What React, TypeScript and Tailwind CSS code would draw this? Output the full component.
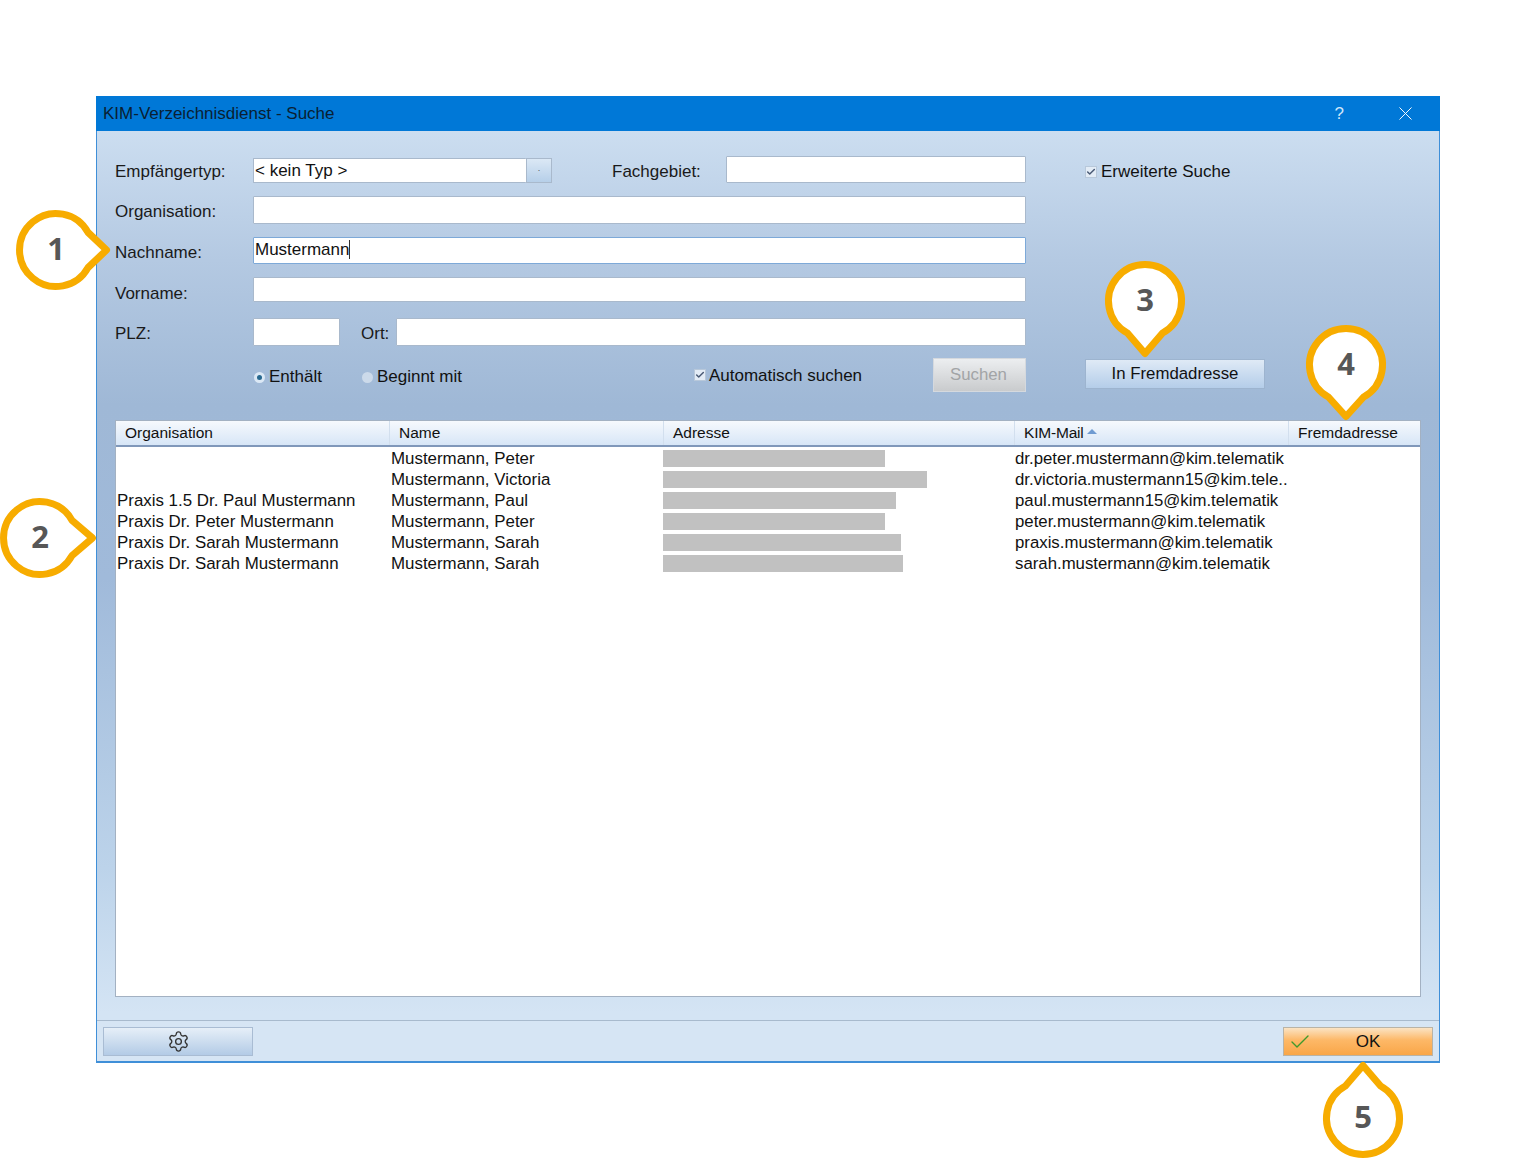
import { Check, Settings, X } from 'lucide-react'

const rows = [
  { org: '', name: 'Mustermann, Peter', bar: 'w-[222px]', mail: 'dr.peter.mustermann@kim.telematik' },
  { org: '', name: 'Mustermann, Victoria', bar: 'w-[264px]', mail: 'dr.victoria.mustermann15@kim.tele..' },
  { org: 'Praxis 1.5 Dr. Paul Mustermann', name: 'Mustermann, Paul', bar: 'w-[233px]', mail: 'paul.mustermann15@kim.telematik' },
  { org: 'Praxis Dr. Peter Mustermann', name: 'Mustermann, Peter', bar: 'w-[222px]', mail: 'peter.mustermann@kim.telematik' },
  { org: 'Praxis Dr. Sarah Mustermann', name: 'Mustermann, Sarah', bar: 'w-[238px]', mail: 'praxis.mustermann@kim.telematik' },
  { org: 'Praxis Dr. Sarah Mustermann', name: 'Mustermann, Sarah', bar: 'w-[240px]', mail: 'sarah.mustermann@kim.telematik' },
]

function Field({ className = 'border-[#a9b9cc]', children }: { className?: string; children?: React.ReactNode }) {
  return (
    <div className={`h-full bg-white border rounded-[1px] flex items-center pl-[1px] text-[17px] text-[#111] ${className}`}>
      {children}
    </div>
  )
}

function FormRow({ label, className = '', labelClass = 'pt-[3px]', children }: { label: string; className?: string; labelClass?: string; children: React.ReactNode }) {
  return (
    <div className={`flex items-center ${className}`}>
      <span className={`w-[138px] shrink-0 text-[#1a1a1a] ${labelClass}`}>{label}</span>
      {children}
    </div>
  )
}

function Tick() {
  return (
    <span className="w-[12px] h-[12px] shrink-0 bg-[#e3ecf6] border border-[#b8c8da] flex items-center justify-center">
      <Check size={10} strokeWidth={3.5} className="text-[#4a5a75]" />
    </span>
  )
}

// speech bubble: the tip points to the right, rotation turns it
function Callout({ n, className, turn = '', tip = 54 }: { n: number; className: string; turn?: string; tip?: number }) {
  return (
    <div className={`absolute w-[80px] h-[80px] flex items-center justify-center ${className}`}>
      <svg viewBox="-40 -40 80 80" className={`absolute inset-0 w-[80px] h-[80px] overflow-visible ${turn}`}>
        <path
          d={`M32 -17.6 A36.5 36.5 0 1 0 32 17.6 L${tip - 3.5} 0 Z`}
          fill="#fff"
          stroke="#f7ac00"
          strokeWidth="7"
          strokeLinejoin="round"
        />
      </svg>
      <span className="relative mb-[4px] font-['Open_Sans',sans-serif] font-bold text-[31px] leading-none text-[#575757]">{n}</span>
    </div>
  )
}

export default function App() {
  return (
    <div className="relative w-[1536px] h-[1159px] bg-white pt-[96px] pl-[96px] overflow-hidden font-['Liberation_Sans',Arial,sans-serif] text-[17px]">
      <div className="w-[1344px] h-[967px] flex flex-col border-x border-b-2 border-[#3f8fd8] bg-[linear-gradient(180deg,#d2e3f4_0%,#b4c9e2_17%,#9fb8d6_32%,#a0bada_50%,#bcd3ea_80%,#d4e4f4_95%)]">
        {/* title bar */}
        <div className="h-[35px] -mx-px shrink-0 bg-[#0078d7] flex items-center pl-[7px] text-[17px] text-[#0a1f33]">
          <span>KIM-Verzeichnisdienst - Suche</span>
          <span className="ml-auto text-[17px] text-[#cfe6fa]">?</span>
          <X size={23} strokeWidth={1} className="ml-[50px] mr-[23px] text-white" />
        </div>

        {/* search form */}
        <div className="h-[289px] shrink-0 flex pl-[18px] pt-[25px]">
          <div className="w-[911px] shrink-0 flex flex-col">
            <FormRow label="Empfängertyp:" className="h-[27px]" labelClass="pt-[5px]">
              <div className="w-[299px] h-[25px] mt-[2px] flex">
                <Field className="flex-1 border-[#a9b9cc] border-r-0">&lt; kein Typ &gt;</Field>
                <div className="w-[26px] bg-[linear-gradient(180deg,#dbe8f5,#b6cfe9)] border border-[#a9b9cc] flex items-center justify-center text-[9px] text-[#556]">·</div>
              </div>
              <span className="ml-[60px] w-[114px] pt-[5px] text-[#1a1a1a]">Fachgebiet:</span>
              <Field className="flex-1 border-[#a9b9cc]" />
            </FormRow>
            <FormRow label="Organisation:" className="h-[28px] mt-[13px]">
              <Field className="flex-1 border-[#a9b9cc]" />
            </FormRow>
            <FormRow label="Nachname:" className="h-[27px] mt-[13px]" labelClass="pt-[4px]">
              <Field className="flex-1 border-[#7da9d8] pb-[2px]">
                Mustermann<span className="w-px h-[19px] bg-[#333]" />
              </Field>
            </FormRow>
            <FormRow label="Vorname:" className="h-[25px] mt-[13px]" labelClass="pt-[8px]">
              <Field className="flex-1 border-[#a9b9cc]" />
            </FormRow>
            <FormRow label="PLZ:" className="h-[28px] mt-[16px]" labelClass="pt-[3px]">
              <Field className="w-[87px] border-[#a9b9cc]" />
              <span className="ml-[21px] w-[35px] pt-[3px] text-[#1a1a1a]">Ort:</span>
              <Field className="flex-1 border-[#a9b9cc]" />
            </FormRow>
            <div className="h-[34px] mt-[12px] flex items-center pl-[139px]">
              <span className="w-[11px] h-[11px] rounded-full bg-[#dbe8f5] flex items-center justify-center mt-[5px]">
                <span className="w-[5px] h-[5px] rounded-full bg-[#27688f]" />
              </span>
              <span className="ml-[4px] mt-[3px] text-[#111]">Enthält</span>
              <span className="ml-[40px] w-[11px] h-[11px] rounded-full bg-[#ccdaea] mt-[5px]" />
              <span className="ml-[4px] mt-[3px] text-[#111]">Beginnt mit</span>
              <div className="ml-[232px] mr-[3px] mt-[-1px]"><Tick /></div>
              <span className="mt-[1px] text-[#111]">Automatisch suchen</span>
              <div className="ml-auto w-[93px] h-[34px] bg-[linear-gradient(180deg,#eceef0,#c9cbcd)] border border-[#d5d9de] flex items-center justify-center pr-[2px] text-[16.8px] text-[#a2a4a6]">
                Suchen
              </div>
            </div>
          </div>
          <div className="ml-[59px] w-[180px] flex flex-col">
            <div className="h-[27px] mt-[2px] flex items-center gap-[4px] text-[#111]">
              <Tick />
              <span>Erweiterte Suche</span>
            </div>
            <div className="h-[30px] mt-[174px] bg-[linear-gradient(180deg,#dfeaf6,#b4cde9)] border border-[#9db4cf] flex items-center justify-center text-[16.8px] text-[#111]">
              In Fremdadresse
            </div>
          </div>
        </div>

        {/* result list */}
        <div className="mx-[18px] h-[577px] shrink-0 bg-white border border-[#a3b1c2] flex flex-col">
          <div className="h-[26px] shrink-0 flex items-center text-[15.5px] text-[#111] border-b-2 border-[#8098ba] bg-[linear-gradient(180deg,#f6f9fd,#d7e6f7)]">
            <span className="w-[274px] pl-[9px] border-r border-[#d2dfee] leading-[24px]">Organisation</span>
            <span className="w-[274px] pl-[9px] border-r border-[#d2dfee] leading-[24px]">Name</span>
            <span className="w-[351px] pl-[9px] border-r border-[#d2dfee] leading-[24px]">Adresse</span>
            <span className="w-[274px] pl-[9px] border-r border-[#d2dfee] leading-[24px] flex items-center gap-[3px] tracking-[-0.2px]">
              KIM-Mail
              <span className="w-0 h-0 border-x-[5px] border-x-transparent border-b-[5px] border-b-[#6f9bd1] mb-[3px]" />
            </span>
            <span className="pl-[9px] leading-[24px]">Fremdadresse</span>
          </div>
          <div className="pt-px">
            {rows.map((r, i) => (
              <div key={i} className="h-[21px] flex items-center text-[16.9px] leading-[21px] text-[#111]">
                <span className="w-[274px] pl-px whitespace-nowrap">{r.org}</span>
                <span className="w-[273px] pl-[1px] whitespace-nowrap">{r.name}</span>
                <span className="w-[352px]"><span className={`block h-[17px] bg-[#c1c1c1] ${r.bar}`} /></span>
                <span className="whitespace-nowrap text-[16.8px]">{r.mail}</span>
              </div>
            ))}
          </div>
        </div>

        {/* footer */}
        <div className="flex-1 mt-[23px] bg-[#d6e5f4] border-t border-[#a8bacd] flex items-center justify-between px-[6px]">
          <div className="w-[150px] h-[29px] mt-px bg-[linear-gradient(180deg,#e6eff8,#b3cbe6)] border border-[#a9bcd3] flex items-center justify-center">
            <Settings size={23} strokeWidth={1.4} className="text-[#333] -mt-[1px]" />
          </div>
          <div className="relative w-[150px] h-[29px] mt-px bg-[linear-gradient(180deg,#fbe3c4,#fdb867_45%,#f9a648)] border border-[#b9b3a6] flex items-center justify-center pl-[20px] text-[#111]">
            <Check size={24} strokeWidth={1.4} className="absolute left-[4px] text-[#3f9a2c]" />
            OK
          </div>
        </div>
      </div>

      <Callout n={1} className="left-[16px] top-[210px]" tip={54} />
      <Callout n={2} className="left-[0px] top-[498px]" tip={56} />
      <Callout n={3} className="left-[1105px] top-[261px]" turn="rotate-90" tip={56} />
      <Callout n={4} className="left-[1306px] top-[325px]" turn="rotate-90" tip={55} />
      <Callout n={5} className="left-[1323px] top-[1078px]" turn="-rotate-90" tip={56} />
    </div>
  )
}
